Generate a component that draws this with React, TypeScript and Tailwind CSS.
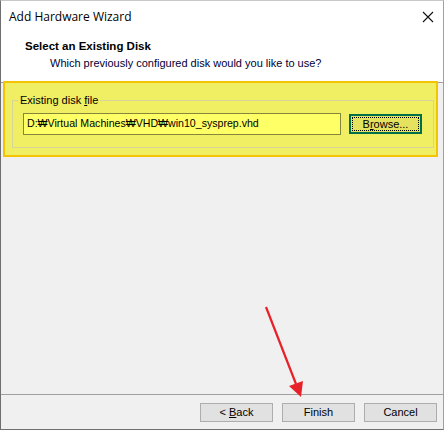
import React from "react";

const ui = { fontFamily: '"Liberation Sans", Arial, sans-serif' };

function Btn({ children }: { children: React.ReactNode }) {
    return (
        <div className="w-[73px] h-[19px] flex items-center justify-center border border-[#adadad] bg-[#e1e1e1] text-[11px] text-black">
            <span>{children}</span>
        </div>
    );
}

export default function App() {
    return (
        <div style={ui} className="w-[444px] h-[430px] flex flex-col bg-[#f0f0f0] border-l border-l-[#6f6f6f] border-b border-b-[#6f6f6f] border-r border-r-[#a0a0a0] border-t border-t-[#c8c8c8]">
            {/* title + header */}
            <div className="bg-white h-[82px] flex flex-col border-b border-[#a0a0a0]">
                <div className="h-[31px] flex items-center justify-between pl-[8px] pr-[9px]">
                    <span className="text-black pt-[1px]" style={{ fontFamily: '"Open Sans", "Liberation Sans", sans-serif', fontSize: 12 }}>
                        Add Hardware Wizard
                    </span>
                    <svg width="12" height="12" viewBox="0 0 12 12" className="mt-[1px]">
                        <path d="M1 1 L11 11 M11 1 L1 11" stroke="#111" strokeWidth="1.1" />
                    </svg>
                </div>
                <div className="pl-[24px] text-[11.5px] font-bold text-black leading-[14px] mt-[7px]">Select an Existing Disk</div>
                <div className="pl-[49px] text-[11px] text-[#000033] leading-[14px] mt-[3px]">
                    Which previously configured disk would you like to use?
                </div>
            </div>

            {/* body */}
            <div className="flex-1 relative">
                <div className="-mt-[2px] ml-[2px] mr-[5px] h-[76px] border-2 border-[#f5c400] bg-[#f0ee62] pl-[7px] pr-[2px] pt-[17px]">
                    <div className="relative border border-[#d6d49a] h-[48px] px-[10px] pt-[12px] flex items-start gap-[8px]">
                        <span className="absolute -top-[8px] left-[5px] px-[2px] bg-[#f0ee62] text-[11px] leading-[14px] text-black">
                            Existing disk <span className="underline">f</span>ile
                        </span>
                        <div className="w-[318px] h-[22px] border border-[#85853c] bg-[#ffff66] flex items-center pl-[3px] text-[10.6px] text-black">
                            D:₩Virtual Machines₩VHD₩win10_sysprep.vhd
                        </div>
                        <div className="w-[73px] h-[20px] mt-[1px] border-2 border-[#00704a] bg-[#e4e25e] p-[1px]">
                            <div className="w-full h-full border border-dotted border-black flex items-center justify-center text-[11px] text-black">
                                <span>B<span className="underline">r</span>owse...</span>
                            </div>
                        </div>
                    </div>
                </div>

                {/* annotation arrow */}
                <svg className="absolute left-0 top-0 pointer-events-none" width="444" height="330" viewBox="0 82 444 330">
                    <line x1="265" y1="306" x2="295" y2="383" stroke="#e8202a" strokeWidth="2.2" />
                    <polygon points="288,385 302,380 300,396" fill="#e8202a" />
                </svg>
            </div>

            {/* footer */}
            <div className="h-[35px] border-t border-[#a0a0a0] flex items-start justify-end gap-[9px] pr-[6px] pt-[8px]">
                <Btn>{"< "}<span className="underline">B</span>ack</Btn>
                <Btn>Finish</Btn>
                <Btn>Cancel</Btn>
            </div>
        </div>
    );
}
